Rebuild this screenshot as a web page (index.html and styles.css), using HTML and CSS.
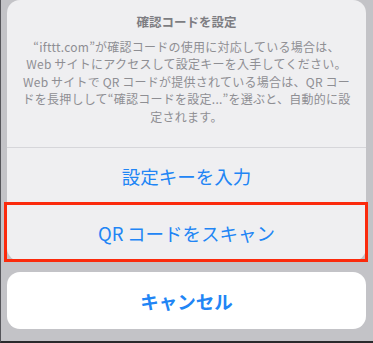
FILE: index.html
```html
<!DOCTYPE html>
<html lang="ja">
<head>
<meta charset="utf-8">
<title>確認コードを設定</title>
<link rel="stylesheet" href="styles.css">
</head>
<body>
<div class="screen">
  <div class="sheet">
    <div class="header">
      <div class="title">確認コードを設定</div>
      <p class="message">“ifttt.com”が確認コードの使用に対応している場合は、<br>Web&#8201;サイトにアクセスして設定キーを入手してください。<br>Web&#8201;サイトで&#8201;QR&#8201;コードが提供されている場合は、QR&#8201;コー<br>ドを長押しして“確認コードを設定...”を選ぶと、自動的に設<br>定されます。</p>
    </div>
    <div class="action">設定キーを入力</div>
    <div class="action">QR&#8201;コードをスキャン<span class="highlight"></span></div>
  </div>
  <div class="cancel">キャンセル</div>
</div>
</body>
</html>
```
FILE: styles.css
```css
html, body {
  margin: 0;
  padding: 0;
}
body {
  width: 373px;
  height: 343px;
  overflow: hidden;
  font-family: "Noto Sans CJK JP", "Noto Sans", sans-serif;
}
.screen {
  box-sizing: border-box;
  width: 373px;
  height: 343px;
  background: #c3c3c7;
  border-left: 1px solid #55555a;
  border-bottom: 2px solid #2a2a2c;
  padding: 0 7px 0 6px;
  display: flex;
  flex-direction: column;
}
.sheet {
  position: relative;
  background: #efeff1;
  border-radius: 13px;
  display: flex;
  flex-direction: column;
}
.header {
  height: 148px;
  box-sizing: border-box;
  padding-top: 13px;
  border-bottom: 1px solid #d6d6da;
  text-align: center;
}
.title {
  font-size: 12.5px;
  line-height: 17px;
  font-weight: 600;
  color: #7d7d82;
}
.message {
  margin: 8px 0 0;
  font-size: 12px;
  line-height: 17.4px;
  color: #8e8e93;
  white-space: nowrap;
  letter-spacing: 0.25px;
}
.action {
  position: relative;
  height: 56px;
  display: flex;
  align-items: center;
  justify-content: center;
  font-size: 18.5px;
  color: #2185f5;
}
.action + .action {
  border-top: 1px solid #d6d6da;
}
.highlight {
  position: absolute;
  left: -3px;
  right: -2px;
  top: -3px;
  bottom: -1px;
  border: 3px solid #fb2a0c;
}
.cancel {
  margin-top: 11px;
  height: 57px;
  background: #ffffff;
  border-radius: 13px;
  display: flex;
  align-items: center;
  justify-content: center;
  font-size: 18.5px;
  font-weight: 700;
  color: #2185f5;
}
```
